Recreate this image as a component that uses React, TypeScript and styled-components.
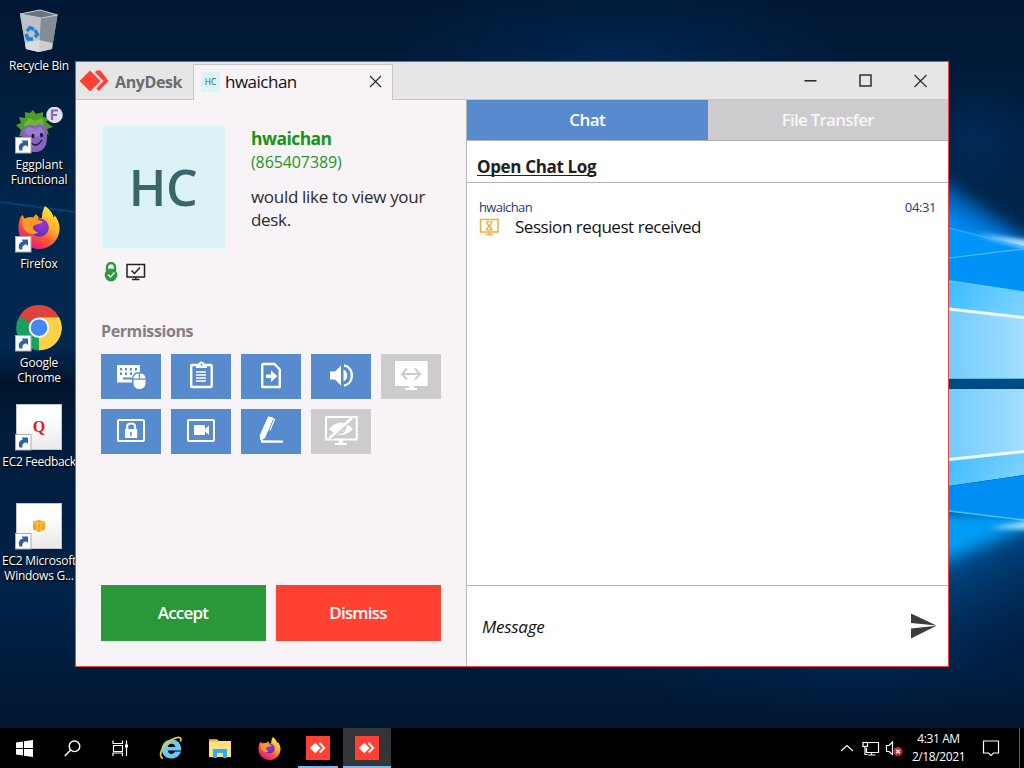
import React from 'react';
import styled, { createGlobalStyle } from 'styled-components';

const GlobalStyle = createGlobalStyle`
  html, body { margin: 0; padding: 0; }
  body { font-family: "Open Sans", "Noto Sans", sans-serif; color: #222; overflow: hidden; }
  *, *::before, *::after { box-sizing: border-box; }
  button { font: inherit; border: 0; padding: 0; margin: 0; background: none; }
  svg { display: block; flex: none; }
`;

const Screen = styled.div`
  position: relative;
  width: 1024px;
  height: 768px;
  overflow: hidden;
  display: flex;
  flex-direction: column;
  background: #001c3a;
`;

const WallpaperSvg = styled.svg`
  position: absolute;
  inset: 0;
`;

const Workspace = styled.main`
  position: relative;
  flex: 1;
`;

const IconColumn = styled.div`
  display: flex;
  flex-direction: column;
  width: 78px;
  padding-top: 8px;
`;

const Shortcut = styled.div`
  height: 99px;
  display: flex;
  flex-direction: column;
  align-items: center;
`;

const ShortcutLabel = styled.span<{ $spacing: number }>`
  margin-top: 1px;
  font-size: 12px;
  line-height: 15px;
  letter-spacing: ${(p) => p.$spacing}px;
  color: #fff;
  text-align: center;
  white-space: pre;
  text-shadow: 0 1px 2px #000, 1px 1px 1px #000;
`;

const Window = styled.section`
  position: absolute;
  left: 75px;
  top: 61px;
  width: 874px;
  height: 606px;
  border: 1px solid #f0403a;
  display: flex;
  flex-direction: column;
  background: #f7f3f7;
`;

const TitleBar = styled.header`
  display: flex;
  height: 38px;
  background: #e6e6e6;
  box-shadow: inset 0 -1px #c6c6ca;
`;

const Brand = styled.div`
  width: 117px;
  padding-left: 3px;
  display: flex;
  align-items: center;
  gap: 6px;
  font-size: 16px;
  font-weight: 700;
  letter-spacing: -0.4px;
  color: #6b6b6b;
`;

const BrandName = styled.span`
  margin-top: 1px;
`;

const SessionTab = styled.div`
  width: 200px;
  margin-top: 2px;
  padding: 0 10px 2px 7px;
  display: flex;
  align-items: center;
  background: #f7f3f7;
  border: 1px solid #c6c6ca;
  border-bottom: 0;
`;

const TabTitle = styled.span`
  flex: 1;
  margin-left: 5px;
  font-size: 17px;
  letter-spacing: -0.5px;
  color: #111;
`;

const TabAvatar = styled.span`
  width: 19px;
  height: 20px;
  display: grid;
  place-items: center;
  background: #dcf3f8;
  color: #2f5c5f;
  font-size: 8.5px;
`;

const WindowControls = styled.div`
  flex: 1;
  display: flex;
  justify-content: flex-end;
  align-items: flex-start;
`;

const ControlButton = styled.button`
  width: 55px;
  height: 37px;
  display: grid;
  place-items: center;
`;

const Columns = styled.div`
  flex: 1;
  display: flex;
`;

const RequestPane = styled.div`
  width: 391px;
  padding: 25px;
  display: flex;
  flex-direction: column;
  border-right: 1px solid #b7b7b9;
`;

const Caller = styled.div`
  display: flex;
  gap: 25px;
  height: 125px;
`;

const Avatar = styled.div`
  width: 124px;
  height: 124px;
  margin-left: 1px;
  padding: 0 2px 1px 0;
  border: 1px solid #e3fafd;
  background: #dcf2f7;
  color: #386669;
  display: grid;
  place-items: center;
  font-size: 50px;
  font-weight: 600;
  letter-spacing: -0.5px;
  line-height: 1;
`;

const CallerText = styled.div`
  display: flex;
  flex-direction: column;
  font-size: 17px;
  line-height: 23px;
  color: #2c2c2c;
`;

const CallerName = styled.strong`
  font-size: 17.5px;
  letter-spacing: -0.55px;
  margin-top: 2px;
  color: #149614;
`;

const CallerId = styled.span`
  margin-top: 1px;
  font-size: 16px;
  letter-spacing: -0.1px;
  color: #269426;
`;

const CallerRequest = styled.p`
  margin: 11px 0 0;
  letter-spacing: -0.31px;
  white-space: pre;
`;

const StatusRow = styled.div`
  display: flex;
  align-items: center;
  gap: 8px;
  margin: 12px 0 0 3px;
  height: 20px;
`;

const PaneHeading = styled.h2`
  margin: 37px 0 0;
  font-size: 16px;
  line-height: 24px;
  font-weight: 700;
  letter-spacing: -0.4px;
  color: #828084;
`;

const PermissionGrid = styled.div`
  display: grid;
  grid-template-columns: repeat(5, 60px);
  gap: 10px;
  margin-top: 11px;
`;

const PermissionTile = styled.button<{ $enabled: boolean }>`
  width: 60px;
  height: 45px;
  background: ${(p) => (p.$enabled ? '#588bce' : '#cdcbce')};
`;

const Decisions = styled.div`
  display: flex;
  gap: 10px;
  margin-top: auto;
`;

const DecisionButton = styled.button<{ $tone: string }>`
  flex: 1;
  height: 56px;
  padding: 0 1px 2px 0;
  background: ${(p) => p.$tone};
  color: #fff;
  font-size: 17px;
  font-weight: 600;
  letter-spacing: -0.8px;
`;

const ChatPane = styled.div`
  flex: 1;
  display: flex;
  flex-direction: column;
  background: #fff;
`;

const PaneTabs = styled.div`
  display: flex;
  height: 41px;
  border-bottom: 1px solid #b4b4b6;
`;

const PaneTab = styled.button<{ $active: boolean }>`
  flex: 1;
  padding-bottom: 2px;
  background: ${(p) => (p.$active ? '#588bce' : '#cdcbce')};
  color: ${(p) => (p.$active ? '#fff' : '#f7f7f8')};
  font-size: 17px;
  font-weight: 600;
  letter-spacing: ${(p) => (p.$active ? -0.6 : -0.75)}px;
`;

const LogBar = styled.div`
  height: 42px;
  padding: 14px 10px 0;
  border-bottom: 1px solid #b4b4b6;
  line-height: 24px;
`;

const LogLink = styled.a`
  font-size: 17px;
  font-weight: 700;
  letter-spacing: -0.34px;
  color: #222;
  text-decoration: underline;
  text-decoration-thickness: 1px;
  text-underline-offset: 2px;
  text-decoration-skip-ink: none;
`;

const MessageList = styled.div`
  flex: 1;
  padding: 16px 12px 0;
`;

const MessageMeta = styled.div`
  display: flex;
  justify-content: space-between;
  font-size: 13px;
  line-height: 17px;
  letter-spacing: -0.4px;
  color: #1d4078;
`;

const Sender = styled.span`
  letter-spacing: -0.62px;
`;

const MessageBody = styled.div`
  display: flex;
  align-items: center;
  gap: 15px;
  height: 22px;
  font-size: 17px;
  letter-spacing: -0.45px;
  color: #111;
`;

const MessageText = styled.span`
  margin-top: -2px;
`;

const Composer = styled.div`
  height: 81px;
  padding: 0 11px 1px 15px;
  border-top: 1px solid #b4b4b6;
  display: flex;
  align-items: center;
  justify-content: space-between;
`;

const Placeholder = styled.span`
  font-size: 17px;
  font-style: italic;
  letter-spacing: -0.25px;
  color: #111;
  margin-top: 1px;
`;

const Taskbar = styled.footer`
  position: relative;
  height: 40px;
  display: flex;
  background: #000;
`;

const TaskItem = styled.div<{ $width?: number; $running?: boolean; $active?: boolean }>`
  width: ${(p) => p.$width ?? 48}px;
  display: grid;
  place-items: center;
  background: ${(p) => (p.$active ? '#333539' : 'transparent')};
  box-shadow: ${(p) => (p.$running ? 'inset 0 -2px #76b9ed' : 'none')};
`;

const TaskGap = styled.div<{ $width: number }>`
  width: ${(p) => p.$width}px;
`;

const Tray = styled.div`
  margin-left: auto;
  display: flex;
  align-items: center;
  color: #fff;
`;

const Clock = styled.div`
  width: 57px;
  font-size: 12px;
  line-height: 18px;
  letter-spacing: -0.4px;
  text-align: center;
  white-space: nowrap;
  margin-right: 15px;
`;

const ShowDesktop = styled.div`
  width: 5px;
  height: 40px;
  margin-left: 19px;
  border-left: 1px solid #5a5a5a;
`;

function Wallpaper() {
  return (
    <WallpaperSvg width="1024" height="768" viewBox="0 0 1024 768">
      <defs>
        <linearGradient id="base" x1="0" y1="0" x2="0" y2="1">
          <stop offset="0" stopColor="#001733" />
          <stop offset="0.12" stopColor="#001d3c" />
          <stop offset="0.3" stopColor="#00284f" />
          <stop offset="0.45" stopColor="#002850" />
          <stop offset="0.5" stopColor="#00152d" />
          <stop offset="0.56" stopColor="#001c3b" />
          <stop offset="0.78" stopColor="#00234a" />
          <stop offset="0.93" stopColor="#001733" />
          <stop offset="1" stopColor="#00122a" />
        </linearGradient>
        <radialGradient id="halo">
          <stop offset="0" stopColor="#003268" stopOpacity="0.9" />
          <stop offset="1" stopColor="#003268" stopOpacity="0" />
        </radialGradient>
        <linearGradient id="pane" x1="0" y1="0" x2="1" y2="0">
          <stop offset="0" stopColor="#74ccff" />
          <stop offset="1" stopColor="#a3deff" />
        </linearGradient>
        <linearGradient id="paneEdge" x1="0" y1="0" x2="1" y2="0.3">
          <stop offset="0" stopColor="#3bbcff" />
          <stop offset="1" stopColor="#78d0ff" />
        </linearGradient>
        <linearGradient id="floor" x1="0" y1="0" x2="0.25" y2="1">
          <stop offset="0" stopColor="#0060ad" />
          <stop offset="0.4" stopColor="#003f78" />
          <stop offset="1" stopColor="#002a55" stopOpacity="0" />
        </linearGradient>
        <filter id="soft" x="-50%" y="-50%" width="200%" height="200%">
          <feGaussianBlur stdDeviation="8" />
        </filter>
        <filter id="glare" x="-50%" y="-100%" width="200%" height="300%">
          <feGaussianBlur stdDeviation="2.5" />
        </filter>
        <filter id="fine" x="-10%" y="-50%" width="120%" height="200%">
          <feGaussianBlur stdDeviation="0.7" />
        </filter>
      </defs>
      <rect width="1024" height="768" fill="url(#base)" />
      <ellipse cx="620" cy="60" rx="240" ry="90" fill="url(#halo)" opacity="0.55" />
      <ellipse cx="860" cy="660" rx="240" ry="60" fill="url(#halo)" opacity="0.45" />
      <path d="M0 202L75 212" stroke="#004178" strokeWidth="2" filter="url(#fine)" />
      <ellipse cx="975" cy="140" rx="70" ry="60" fill="url(#halo)" opacity="0.6" />
      <path d="M920 165L1050 255V300H920Z" fill="#0065bd" filter="url(#soft)" />
      <path d="M920 195L1050 262V300H920Z" fill="#008cf2" filter="url(#soft)" />
      <rect x="949" y="520" width="75" height="150" fill="url(#floor)" />
      <path d="M920 510H1050L1024 528L920 572Z" fill="#009cf6" filter="url(#soft)" />
      <path d="M949 258L1024 249V295H949Z" fill="#0092f6" />
      <path d="M949 228L1024 244V250L949 258Z" fill="#0097fb" opacity="0.8" />
      <path d="M975 234L1040 242V252Z" fill="#c2edff" filter="url(#glare)" />
      <path d="M949 228L1024 247" stroke="#3fb4ff" strokeWidth="1.500" opacity="0.7" filter="url(#fine)" />
      <path d="M949 258L1024 249" stroke="#47baff" strokeWidth="1.2" />
      <path d="M949 281L1024 292V318L949 308Z" fill="url(#paneEdge)" />
      <path d="M949 309L1024 318V379H949Z" fill="url(#pane)" />
      <path d="M949 309L1024 317.5" stroke="#f2fbff" strokeWidth="3" filter="url(#fine)" />
      <path d="M949 281L1024 292" stroke="#5dcbff" strokeWidth="1.5" />
      <rect x="949" y="379" width="75" height="10" fill="#004a87" />
      <path d="M949 378.5H1024" stroke="#5fb6d8" strokeWidth="1" />
      <path d="M949 389H1024V451L949 460Z" fill="url(#pane)" />
      <path d="M949 460L1024 451V475L949 486Z" fill="url(#paneEdge)" />
      <path d="M949 486L1024 475V519L949 511Z" fill="#008df4" />
      <path d="M949 459.500L1024 451.500" stroke="#f2fbff" strokeWidth="3" filter="url(#fine)" />
      <path d="M949 511L1024 520" stroke="#43c6ff" strokeWidth="1.5" />
      <path d="M990 528L1040 518V530Z" fill="#9cdfff" filter="url(#glare)" />
    </WallpaperSvg>
  );
}

function LinkArrow() {
  return (
    <g transform="translate(0 30)">
      <rect x="0.5" y="0.5" width="15.500" height="15.500" fill="#fff" stroke="#a9adb3" />
      <path d="M4.500 13.500C3 9.500 4 6.500 8 5.500L6.500 3.500H13V10L11 8.200C8 9 7 10.500 7.500 13.500Z" fill="#2c5fa6" />
    </g>
  );
}

function RecycleBin() {
  return (
    <svg width="48" height="49" viewBox="0 0 48 49">
      <path d="M5 6L25 2L42.500 7L37 41L24 44L11 41Z" fill="#9aa3ab" />
      <path d="M5 6L26 10L24 44L11 41Z" fill="#bcc2c8" />
      <path d="M26 10L42.500 7L37 41L24 44Z" fill="#848d96" />
      <path d="M5 6L25 2L42.500 7L26 10Z" fill="#68737d" stroke="#c5cace" />
      <path d="M10 35L24 32L37.500 35L37 41L24 44L11 41Z" fill="#e4e4e4" opacity="0.75" />
      <g fill="none" stroke="#1683d8" strokeWidth="3.400">
        <path d="M12 23L15 19.500L19 21.500" />
        <path d="M20 22L22.500 26.500L20 29" />
        <path d="M18 31H13L11 26" />
      </g>
    </svg>
  );
}

function Eggplant() {
  return (
    <svg width="48" height="49" viewBox="0 0 48 49">
      <g transform="translate(0 -1)">
        <path d="M1 19L6 17L4 11L10 12L10 6L15 7L18 4L21 8L28 6L28 11L35 12L31 16L38 21L32 23L34 29L24 24L12 27L4 31L6 24Z" fill="#4d9b2b" />
        <path d="M9 18L14 12L20 15L27 12L29 19L24 24H10Z" fill="#6cb93a" />
        <path d="M7 27C8 19 14 18 20 20C26 16 32 19 32 28C33 40 28 47 19 46C10 46 5 37 7 27Z" fill="#8763bd" />
        <path d="M10 25C12 20 16 21 20 23C24 20 28 21 29 27C29 32 13 33 10 25Z" fill="#9a7bd0" />
        <ellipse cx="18" cy="30" rx="1.500" ry="2.200" fill="#1d1830" />
        <ellipse cx="26.500" cy="29" rx="1.500" ry="2.200" fill="#1d1830" />
        <path d="M16 37Q22 42 27 34" fill="none" stroke="#1d1830" strokeWidth="1.400" />
        <circle cx="39.500" cy="9" r="8.300" fill="#e3dff0" />
        <path d="M37 14V4.500H43M37 9H42" fill="none" stroke="#8866cc" strokeWidth="2.200" />
      </g>
      <LinkArrow />
    </svg>
  );
}

function FirefoxMark({ size }: { size: number }) {
  return (
    <svg width={size} height={size} viewBox="0 0 44 44">
      <defs>
        <linearGradient id="foxBody" x1="0.85" y1="0.1" x2="0.25" y2="0.95">
          <stop offset="0" stopColor="#ffe63b" />
          <stop offset="0.35" stopColor="#ffb02a" />
          <stop offset="0.65" stopColor="#ff5535" />
          <stop offset="1" stopColor="#e6148a" />
        </linearGradient>
        <radialGradient id="foxGlobe" cx="0.6" cy="0.3" r="0.8">
          <stop offset="0" stopColor="#a433d8" />
          <stop offset="1" stopColor="#4a35b8" />
        </radialGradient>
      </defs>
      <path d="M28 0C34 4 36 8 37 12C38 11 38 9.500 37.500 9C43 15 45 24 41 32C37 40 30 44 22 44C10 44 1 34 1 23C1 17 2 12 5 9L7 13C9 12 13 11 16 12L19 9C21 10 22 12 22 13L25 12C25 8 26 4 28 0Z" fill="url(#foxBody)" />
      <circle cx="22.500" cy="22" r="9.500" fill="url(#foxGlobe)" />
      <path d="M5 9L7 13C10 11.500 13 11.500 16 12L19 8L21 14L26 16C24 19 19 18 17 20C14 22 17 26 21 27C15 31 7 27 5 20Z" fill="#ff9828" />
    </svg>
  );
}

function FirefoxShortcut() {
  return (
    <svg width="48" height="49" viewBox="0 0 48 49">
      <g transform="translate(2.500 0)"><FirefoxMark size={43} /></g>
      <LinkArrow />
    </svg>
  );
}

function Chrome() {
  return (
    <svg width="48" height="49" viewBox="0 0 48 49">
      <g transform="translate(0 -0.800)">
        <path d="M24 23.500L4.500 12.200A22.300 22.300 0 0 1 43.500 12.500Z" fill="#d9453a" />
        <path d="M24 23.500L43.400 12.500A22.300 22.300 0 0 1 24 46Z" fill="#fdd247" />
        <path d="M24 23.500L24 46A22.300 22.300 0 0 1 4.500 12.200Z" fill="#18a160" />
        <path d="M24 13H44A22.300 22.300 0 0 1 24 46L33 29Z" fill="#fdd247" />
        <path d="M4.500 12.200A22.300 22.300 0 0 1 43.500 13H24L15 18Z" fill="#d9453a" />
        <path d="M15 29L4.500 12.200L15 22Z" fill="#18a160" />
        <circle cx="24" cy="23.500" r="10.300" fill="#f4f4f4" />
        <circle cx="24" cy="23.500" r="8.300" fill="#4587f3" />
      </g>
      <LinkArrow />
    </svg>
  );
}

const SheetGlyph = styled.text`
  font-family: "Liberation Serif", serif;
  font-size: 16px;
  font-weight: 700;
  fill: #e01a22;
`;

function Sheet({ children }: { children: React.ReactNode }) {
  return (
    <svg width="48" height="49" viewBox="0 0 48 49">
      <defs>
        <linearGradient id="sheetFill" x1="0" y1="0" x2="0.2" y2="1">
          <stop offset="0.4" stopColor="#fff" />
          <stop offset="1" stopColor="#ececee" />
        </linearGradient>
      </defs>
      <rect x="1.500" y="0.500" width="45" height="45" fill="url(#sheetFill)" stroke="#c4c4c6" />
      {children}
      <LinkArrow />
    </svg>
  );
}

function Cube() {
  return (
    <g>
      <path d="M18 18.500L24 17L30 18.500V26.500L24 29L18 26.500Z" fill="#f3a71b" />
      <path d="M18 18.700L24 20.300L30 18.700M22.200 20V28M25.800 20V28" fill="none" stroke="#fbd68c" strokeWidth="0.800" />
    </g>
  );
}

function DeskMark({ width, height, color }: { width: number; height: number; color: string }) {
  return (
    <svg width={width} height={height} viewBox="0 0 30 22">
      <path d="M0.500 11L11 0.500L21.500 11L11 21.500Z" fill={color} />
      <path d="M17.500 0.500H21.500L29.500 11L19.800 21L17.300 18.500L24.500 11L16 2.200Z" fill={color} />
    </svg>
  );
}

function PermissionIcon({ kind }: { kind: string }) {
  const white = '#fff';
  const drawings: Record<string, React.ReactNode> = {
    keyboard: (
      <>
        <rect x="16" y="11" width="23" height="17.500" fill={white} />
        <g fill="#588bce">
          {[19, 24, 29, 34].map((x) => <rect key={x} x={x} y="14" width="2" height="2.500" />)}
          {[19, 24, 29, 34].map((x) => <rect key={x} x={x} y="18.500" width="2" height="2.500" />)}
          <rect x="22" y="23.500" width="9" height="2" />
          <rect x="31" y="18" width="15" height="18" rx="6.500" />
        </g>
        <path d="M32.500 24.500C32.500 21 35 19.500 37.800 19.500V24.500ZM39 19.500C42 19.500 44.500 21 44.500 24.500H39ZM32.500 25.800H44.500V29C44.500 37 32.500 37 32.500 29Z" fill={white} />
      </>
    ),
    clipboard: (
      <>
        <rect x="20.200" y="11" width="20.500" height="22" rx="1" fill="none" stroke={white} strokeWidth="2.400" />
        <path d="M25 14V10H27.500C28 6.500 33 6.500 33.500 10H36V14Z" fill={white} />
        <circle cx="30.500" cy="10.500" r="1" fill="#588bce" />
        <path d="M25 18H35M25 21H35M25 24H35M25 27H35" stroke={white} strokeWidth="1.700" />
      </>
    ),
    file: (
      <>
        <path d="M22 10H33.500L38.800 15.500V33H21.200V10.800Z" fill="none" stroke={white} strokeWidth="2.400" strokeLinejoin="round" />
        <path d="M25 20.500H30V16.500L36.500 22.200L30 28V24H25Z" fill={white} />
      </>
    ),
    sound: (
      <>
        <path d="M19 17.500H24L30 11.500V31.500L24 25.500H19Z" fill={white} />
        <path d="M32.500 15.500C37.500 17.500 37.500 25.500 32.500 27.500Z" fill={white} />
        <path d="M33 11.300C43.500 13.500 43.500 29.500 33 31.700" fill="none" stroke={white} strokeWidth="2.400" />
      </>
    ),
    resize: (
      <>
        <path d="M14 7H46.700V32H33V34H36V36H24V34H28V32H14Z" fill={white} />
        <path d="M22 20H38M26 14.500L21 20L26 25.500M34 14.500L39 20L34 25.500" fill="none" stroke="#cdcbce" strokeWidth="2" />
      </>
    ),
    lock: (
      <>
        <rect x="17" y="11" width="26" height="21" rx="1" fill="none" stroke={white} strokeWidth="2" />
        <rect x="24" y="20" width="12.200" height="9" fill={white} />
        <path d="M26.200 20V17.500C26.200 13.500 34 13.500 34 17.500V20" fill="none" stroke={white} strokeWidth="2.200" />
        <path d="M30 23V27" stroke="#588bce" strokeWidth="1.500" />
      </>
    ),
    video: (
      <>
        <rect x="17" y="11" width="26" height="21" rx="1" fill="none" stroke={white} strokeWidth="2" />
        <path d="M23 16.500Q23 16 23.500 16H33.500Q34 16 34 17V20L38 16.500V26L34 22.500V25Q34 26 33.500 26H23Z" fill={white} />
      </>
    ),
    pen: (
      <>
        <path d="M27.500 7.800L32 9.300L23.500 29L19.700 31L19.200 26.500Z" fill={white} stroke={white} strokeWidth="1" />
        <path d="M30 8.500L33.500 10.500L28.800 21.500" fill="none" stroke={white} strokeWidth="1.200" />
        <path d="M20 29.500L22 31.200L42 31.500V33.700H20Z" fill={white} />
      </>
    ),
    hidden: (
      <>
        <rect x="15" y="8" width="30.700" height="22.500" fill="none" stroke={white} strokeWidth="2" />
        <path d="M28 31H32V34H36V36H24V34H28Z" fill={white} />
        <path d="M18 20Q30 7 42 20Q30 32 18 20Z" fill={white} />
        <path d="M34.500 17.500Q35 23 28.500 24.500" fill="none" stroke="#cdcbce" strokeWidth="1.500" />
        <path d="M20.500 30L42.500 10" stroke="#cdcbce" strokeWidth="2.200" />
        <path d="M18.500 29L41 9" stroke={white} strokeWidth="2.800" />
      </>
    ),
  };
  return <svg width="60" height="45" viewBox="0 0 60 45">{drawings[kind]}</svg>;
}

function SecureLock() {
  return (
    <svg width="14" height="20" viewBox="0 0 14 20">
      <path d="M3 9V5.500C3 -0.500 11 -0.500 11 5.500V9" fill="none" stroke="#2a9b3b" strokeWidth="2.400" />
      <ellipse cx="7" cy="13" rx="6.300" ry="6.500" fill="#2a9b3b" />
      <path d="M4 12.500L6.500 15L10.500 10.500" fill="none" stroke="#fff" strokeWidth="1.500" />
    </svg>
  );
}

function MonitorCheck() {
  return (
    <svg width="20" height="18" viewBox="0 0 20 18">
      <path d="M1 1.500H18.500V14H1ZM9.800 14V16M6 16.500H13.500" fill="none" stroke="#222" strokeWidth="1.500" />
      <path d="M5.500 7.500L8.500 10.500L14 4.500" fill="none" stroke="#222" strokeWidth="1.500" />
    </svg>
  );
}

function MonitorWait() {
  return (
    <svg width="21" height="18" viewBox="0 0 21 18">
      <path d="M1.500 1.500H19V14H1.500ZM10.200 14V16M6.500 16.500H14" fill="none" stroke="#eeae37" strokeWidth="1.500" />
      <path d="M7 3.800H13.500M7 11.800H13.500M8 4V5.500L12.500 10.200V11.800M12.500 4V5.500L8 10.200V11.800" fill="none" stroke="#eeae37" strokeWidth="1.300" />
    </svg>
  );
}

function Explorer() {
  return (
    <svg width="22" height="19" viewBox="0 0 22 19">
      <path d="M0 0.500H8L10 2H22V18H0Z" fill="#fbdf87" />
      <path d="M0 0.500H8L9.500 2.500H0Z" fill="#eab934" />
      <path d="M4 10H18V19H14V14H8V19H4Z" fill="#30ade4" />
    </svg>
  );
}

function InternetExplorer() {
  return (
    <svg width="24" height="24" viewBox="0 0 24 24">
      <path d="M22 15.500C20 20.500 16.500 22.500 12.500 22.500C6.500 22.500 2.800 18.500 2.800 13C2.800 7.500 7 3.500 12.500 3.500C19 3.500 22.500 8 22.300 14.500H8.800C9.500 19 14.500 18.800 16 15.500ZM8.800 11H16.300C15.800 6.800 9.600 6.800 8.800 11Z" fill="#62cdf8" />
      <path d="M4 22.500C-2 20 4 9 12 4C18 0.500 23.500 0 21.500 5.500" fill="none" stroke="#f5c62c" strokeWidth="1.800" />
    </svg>
  );
}

function TaskDesk() {
  return (
    <svg width="24" height="24" viewBox="0 0 24 24">
      <rect width="24" height="24" fill="#ff4032" />
      <path d="M4 12L9.300 6.700L14.600 12L9.300 17.300Z" fill="#fff" />
      <path d="M13 7.500L14.200 7.500L18.200 12L13.700 16.500" fill="none" stroke="#fff" strokeWidth="1.900" />
    </svg>
  );
}

const shortcuts = [
  { label: 'Recycle Bin', spacing: -0.25, icon: <RecycleBin /> },
  { label: 'Eggplant\nFunctional', spacing: -0.15, icon: <Eggplant /> },
  { label: 'Firefox', spacing: -0.15, icon: <FirefoxShortcut /> },
  { label: 'Google\nChrome', spacing: -0.2, icon: <Chrome /> },
  { label: 'EC2 Feedback', spacing: -0.33, icon: <Sheet><SheetGlyph x="17.800" y="27.500">Q</SheetGlyph></Sheet> },
  { label: 'EC2 Microsoft\nWindows G...', spacing: -0.25, icon: <Sheet><Cube /></Sheet> },
];

const permissions = [
  { kind: 'keyboard', enabled: true },
  { kind: 'clipboard', enabled: true },
  { kind: 'file', enabled: true },
  { kind: 'sound', enabled: true },
  { kind: 'resize', enabled: false },
  { kind: 'lock', enabled: true },
  { kind: 'video', enabled: true },
  { kind: 'pen', enabled: true },
  { kind: 'hidden', enabled: false },
];

export default function App() {
  return (
    <Screen>
      <GlobalStyle />
      <Wallpaper />
      <Workspace>
        <IconColumn>
          {shortcuts.map((s) => (
            <Shortcut key={s.label}>
              {s.icon}
              <ShortcutLabel $spacing={s.spacing}>{s.label}</ShortcutLabel>
            </Shortcut>
          ))}
        </IconColumn>
        <Window>
          <TitleBar>
            <Brand>
              <DeskMark width={30} height={22} color="#ff4032" />
              <BrandName>AnyDesk</BrandName>
            </Brand>
            <SessionTab>
              <TabAvatar>HC</TabAvatar>
              <TabTitle>hwaichan</TabTitle>
              <svg width="13" height="13" viewBox="0 0 13 13">
                <path d="M1 1L12 12M12 1L1 12" stroke="#222" strokeWidth="1.100" />
              </svg>
            </SessionTab>
            <WindowControls>
              <ControlButton>
                <svg width="13" height="13" viewBox="0 0 13 13"><path d="M0.500 6.800H12.500" stroke="#222" strokeWidth="1.500" /></svg>
              </ControlButton>
              <ControlButton>
                <svg width="13" height="13" viewBox="0 0 13 13"><rect x="1" y="1" width="11" height="11" fill="none" stroke="#222" strokeWidth="1.400" /></svg>
              </ControlButton>
              <ControlButton>
                <svg width="14" height="14" viewBox="0 0 14 14"><path d="M0.500 1L12.500 13M12.500 1L0.500 13" stroke="#333" strokeWidth="1.300" /></svg>
              </ControlButton>
            </WindowControls>
          </TitleBar>
          <Columns>
            <RequestPane>
              <Caller>
                <Avatar>HC</Avatar>
                <CallerText>
                  <CallerName>hwaichan</CallerName>
                  <CallerId>(865407389)</CallerId>
                  <CallerRequest>{'would like to view your\ndesk.'}</CallerRequest>
                </CallerText>
              </Caller>
              <StatusRow>
                <SecureLock />
                <MonitorCheck />
              </StatusRow>
              <PaneHeading>Permissions</PaneHeading>
              <PermissionGrid>
                {permissions.map((p) => (
                  <PermissionTile key={p.kind} $enabled={p.enabled}>
                    <PermissionIcon kind={p.kind} />
                  </PermissionTile>
                ))}
              </PermissionGrid>
              <Decisions>
                <DecisionButton $tone="#2a9739">Accept</DecisionButton>
                <DecisionButton $tone="#ff4132">Dismiss</DecisionButton>
              </Decisions>
            </RequestPane>
            <ChatPane>
              <PaneTabs>
                <PaneTab $active>Chat</PaneTab>
                <PaneTab $active={false}>File Transfer</PaneTab>
              </PaneTabs>
              <LogBar>
                <LogLink>Open Chat Log</LogLink>
              </LogBar>
              <MessageList>
                <MessageMeta>
                  <Sender>hwaichan</Sender>
                  <span>04:31</span>
                </MessageMeta>
                <MessageBody>
                  <MonitorWait />
                  <MessageText>Session request received</MessageText>
                </MessageBody>
              </MessageList>
              <Composer>
                <Placeholder>Message</Placeholder>
                <svg width="26" height="26" viewBox="0 0 26 26">
                  <path d="M0 0.500L25.500 12.500L0 10ZM0 15.500L25.500 12.800L0 25.500Z" fill="#3c3c3c" />
                </svg>
              </Composer>
            </ChatPane>
          </Columns>
        </Window>
      </Workspace>
      <Taskbar>
        <TaskItem>
          <svg width="17" height="17" viewBox="0 0 17 17">
            <path d="M0 2.400L7 1.400V8H0ZM8 1.200L17 0V8H8ZM0 9H7V15.600L0 14.600ZM8 9H17V17L8 15.800Z" fill="#fff" />
          </svg>
        </TaskItem>
        <TaskItem>
          <svg width="17" height="17" viewBox="0 0 17 17">
            <circle cx="10.500" cy="6.300" r="5.300" fill="none" stroke="#fff" strokeWidth="1.400" />
            <path d="M6.700 10L0.800 16" stroke="#fff" strokeWidth="1.500" />
          </svg>
        </TaskItem>
        <TaskItem>
          <svg width="17" height="17" viewBox="0 0 17 17">
            <path d="M1 0.500V3.500H10.500V0.500M1 16V13H10.500V16M1.500 5.500H10.500V11.500H1.500ZM14.500 0.500V16" fill="none" stroke="#fff" strokeWidth="1.200" />
            <rect x="13" y="4.500" width="3" height="3" fill="#fff" />
          </svg>
        </TaskItem>
        <TaskItem $width={53}><InternetExplorer /></TaskItem>
        <TaskItem $width={45}><Explorer /></TaskItem>
        <TaskItem $width={54}><FirefoxMark size={23} /></TaskItem>
        <TaskGap $width={2} />
        <TaskItem $width={40} $running><TaskDesk /></TaskItem>
        <TaskGap $width={5} />
        <TaskItem $width={48} $running $active><TaskDesk /></TaskItem>
        <Tray>
          <svg width="70" height="40" viewBox="0 0 70 40">
            <g fill="none" stroke="#fff" strokeWidth="1.200">
              <path d="M1 23L7 17.500L13 23" />
              <path d="M28 14.500H38.500V24.500H26.500V20M31.500 24.500V27M28 27H35.500" />
              <rect x="23" y="14.500" width="4.500" height="4" />
              <path d="M25 18.500V26.500H27.500" />
              <path d="M46.500 17.500H49L52.500 14V26.500L49 23.500H46.500Z" />
            </g>
            <circle cx="58" cy="23.500" r="4.600" fill="#d9202c" />
            <path d="M56.200 21.700L59.800 25.300M59.800 21.700L56.200 25.300" stroke="#fff" strokeWidth="1.300" />
          </svg>
          <Clock>4:31 AM<br />2/18/2021</Clock>
          <svg width="18" height="18" viewBox="0 0 18 18">
            <path d="M1.500 2H16.500V14H11.500L9 16.500L6.500 14H1.500Z" fill="none" stroke="#fff" strokeWidth="1.200" />
          </svg>
          <ShowDesktop />
        </Tray>
      </Taskbar>
    </Screen>
  );
}
